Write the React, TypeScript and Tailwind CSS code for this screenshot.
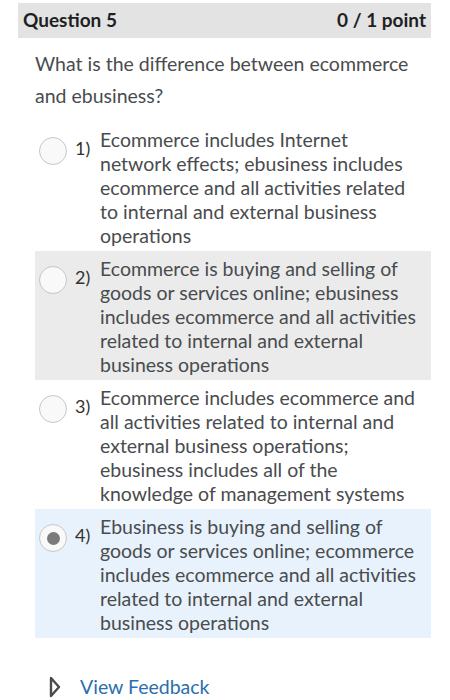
import { Fragment } from "react";

type Option = {
  num: string;
  lines: string[];
  tone: "plain" | "grey" | "blue";
  selected?: boolean;
};

const options: Option[] = [
  {
    num: "1)",
    lines: [
      "Ecommerce includes Internet",
      "network effects; ebusiness includes",
      "ecommerce and all activities related",
      "to internal and external business",
      "operations",
    ],
    tone: "plain",
  },
  {
    num: "2)",
    lines: [
      "Ecommerce is buying and selling of",
      "goods or services online; ebusiness",
      "includes ecommerce and all activities",
      "related to internal and external",
      "business operations",
    ],
    tone: "grey",
  },
  {
    num: "3)",
    lines: [
      "Ecommerce includes ecommerce and",
      "all activities related to internal and",
      "external business operations;",
      "ebusiness includes all of the",
      "knowledge of management systems",
    ],
    tone: "plain",
  },
  {
    num: "4)",
    lines: [
      "Ebusiness is buying and selling of",
      "goods or services online; ecommerce",
      "includes ecommerce and all activities",
      "related to internal and external",
      "business operations",
    ],
    tone: "blue",
    selected: true,
  },
];

const toneClass = {
  plain: "bg-white",
  grey: "bg-[#ebebeb]",
  blue: "bg-[#e8f2fc]",
};

const OptionRow = ({ option }: { option: Option }) => (
  <div className={`flex items-start pt-[6px] pb-[3px] pl-[4px] ${toneClass[option.tone]}`}>
    <div className="mt-[9px] flex h-[28px] w-[28px] shrink-0 items-center justify-center rounded-full border border-[#c6c6c6] bg-[#f9f9f9]">
      {option.selected && <div className="h-[13px] w-[13px] rounded-full bg-[#7b7b7b]" />}
    </div>
    <div className="ml-[8px] mt-[10px] w-[25px] shrink-0 text-[18px] leading-[20px] text-[#333]">{option.num}</div>
    <div className="whitespace-nowrap text-[19.5px] leading-[24px] text-[#494c4e]">
      {option.lines.map((line, i) => (
        <Fragment key={i}>
          {line}
          {i < option.lines.length - 1 && <br />}
        </Fragment>
      ))}
    </div>
  </div>
);

export default function App() {
  return (
    <div className="min-h-[700px] bg-white pt-[3px] pl-[18px] font-['Lato','Liberation_Sans',sans-serif]">
      <div className="w-[413px]">
        <div className="flex h-[35px] items-center justify-between bg-[#e3e3e3] px-[5px] text-[19px] font-bold text-[#1f1f1f]">
          <span>Question 5</span>
          <span>0 / 1 point</span>
        </div>

        <div className="pl-[17px]">
          <p className="mt-[10px] whitespace-nowrap text-[19.5px] leading-[32px] text-[#494c4e]">
            What is the difference between ecommerce
            <br />
            and ebusiness?
          </p>

          <div className="mt-[10px]">
            {options.map((option) => (
              <OptionRow key={option.num} option={option} />
            ))}
          </div>

          <div className="mt-[34px] flex items-center pl-[14px]">
            <svg width="12" height="22" viewBox="0 0 12 22" className="shrink-0">
              <path d="M2 2 L10 11 L2 20 Z" fill="none" stroke="#4a4a4a" strokeWidth="2.4" strokeLinejoin="round" />
            </svg>
            <span className="ml-[19px] text-[19.5px] text-[#2b6fad]">View Feedback</span>
          </div>
        </div>
      </div>
    </div>
  );
}
